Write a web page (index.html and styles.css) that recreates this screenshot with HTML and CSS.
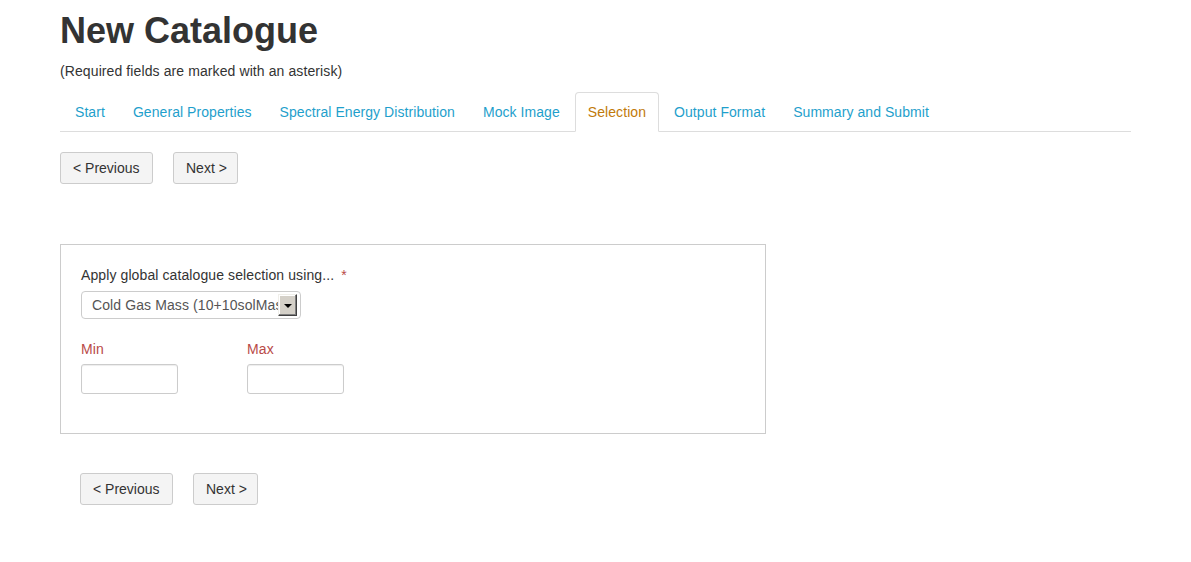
FILE: index.html
```html
<!DOCTYPE html>
<html lang="en">
<head>
<meta charset="utf-8">
<title>New Catalogue</title>
<link rel="stylesheet" href="styles.css">
</head>
<body>
<div class="container">
  <h1 class="title">New Catalogue</h1>
  <p class="note">(Required fields are marked with an asterisk)</p>
  <ul class="tabs">
    <li><a href="#">Start</a></li>
    <li><a href="#">General Properties</a></li>
    <li><a href="#">Spectral Energy Distribution</a></li>
    <li><a href="#">Mock Image</a></li>
    <li class="active"><a href="#">Selection</a></li>
    <li><a href="#">Output Format</a></li>
    <li><a href="#">Summary and Submit</a></li>
  </ul>
  <div class="actions">
    <button class="btn btn-prev">&lt; Previous</button>
    <button class="btn btn-next">Next &gt;</button>
  </div>
  <div class="panel">
    <label class="field-label">Apply global catalogue selection using... <span class="req">*</span></label>
    <div class="select">
      <span class="select-text">Cold Gas Mass (10+10solMass)</span>
      <span class="select-arrow"><span class="tri"></span></span>
    </div>
    <div class="range">
      <div class="range-col">
        <label class="range-label">Min</label>
        <input class="range-input" type="text">
      </div>
      <div class="range-col">
        <label class="range-label">Max</label>
        <input class="range-input" type="text">
      </div>
    </div>
  </div>
  <div class="actions actions-bottom">
    <button class="btn btn-prev">&lt; Previous</button>
    <button class="btn btn-next">Next &gt;</button>
  </div>
</div>
</body>
</html>
```

FILE: styles.css
```css
* { box-sizing: border-box; }
html, body { margin: 0; padding: 0; background: #fff; }
body {
  font-family: "Liberation Sans", Arial, Helvetica, sans-serif;
  font-size: 14px;
  line-height: 20px;
  color: #333;
  letter-spacing: 0.1px;
}
.container {
  width: 1131px;
  padding: 0 0 0 60px;
}
.title {
  margin: 11px 0 10px;
  font-size: 36px;
  line-height: 40px;
  font-weight: bold;
  color: #333;
  letter-spacing: 0;
}
.note {
  margin: 0 0 11px;
}
.tabs {
  list-style: none;
  margin: 0;
  padding: 0 0 0 2px;
  display: flex;
  border-bottom: 1px solid #ddd;
}
.tabs li {
  margin: 0 2px -1px 0;
}
.tabs a {
  display: block;
  padding: 9px 12px;
  border: 1px solid transparent;
  border-radius: 4px 4px 0 0;
  color: #1f9fcc;
  text-decoration: none;
  letter-spacing: 0.065px;
}
.tabs .active a {
  border-color: #ddd #ddd transparent;
  background: #fff;
  color: #c17a0a;
}
.actions {
  display: flex;
  gap: 20px;
  margin-top: 20px;
}
.btn {
  font: inherit;
  letter-spacing: 0;
  color: #333;
  height: 32px;
  padding: 5px 12px;
  line-height: 20px;
  background: #f4f4f4;
  border: 1px solid #ccc;
  border-radius: 3px;
  text-align: left;
  white-space: nowrap;
}
.btn-prev { width: 93px; }
.btn-next { width: 65px; padding-left: 12px; padding-right: 0; }
.panel {
  width: 706px;
  margin-top: 60px;
  border: 1px solid #ccc;
  padding: 20px 20px 39px;
}
.field-label {
  display: block;
  color: #333;
}
.req {
  color: #b94a48;
  margin-left: 3px;
}
.select {
  margin-top: 6px;
  width: 220px;
  height: 28px;
  border: 1px solid #ccc;
  border-radius: 4px;
  display: flex;
  align-items: center;
  padding: 2px 3px 2px 10px;
  color: #555;
  background: #fff;
}
.select-text {
  flex: 1;
  overflow: hidden;
  white-space: nowrap;
}
.select-arrow {
  flex: none;
  width: 19px;
  height: 22px;
  background: #d4d0c8;
  border-top: 1px solid #f0efea;
  border-left: 1px solid #f0efea;
  border-right: 1px solid #404040;
  border-bottom: 1px solid #404040;
  box-shadow: inset -1px -1px 0 #808080, inset 1px 1px 0 #fff;
  display: flex;
  align-items: center;
  justify-content: center;
}
.tri {
  width: 0;
  height: 0;
  border-left: 4px solid transparent;
  border-right: 4px solid transparent;
  border-top: 4px solid #000;
  margin-top: 1px;
}
.range {
  display: flex;
  margin-top: 20px;
}
.range-col {
  width: 166px;
  display: flex;
  flex-direction: column;
}
.range-label {
  color: #b94a48;
}
.range-input {
  margin-top: 5px;
  width: 97px;
  height: 30px;
  border: 1px solid #ccc;
  border-radius: 3px;
  box-shadow: inset 0 1px 1px rgba(0,0,0,0.075);
  font: inherit;
  padding: 4px 6px;
}
.actions-bottom {
  margin-top: 39px;
  padding-left: 20px;
}
```
